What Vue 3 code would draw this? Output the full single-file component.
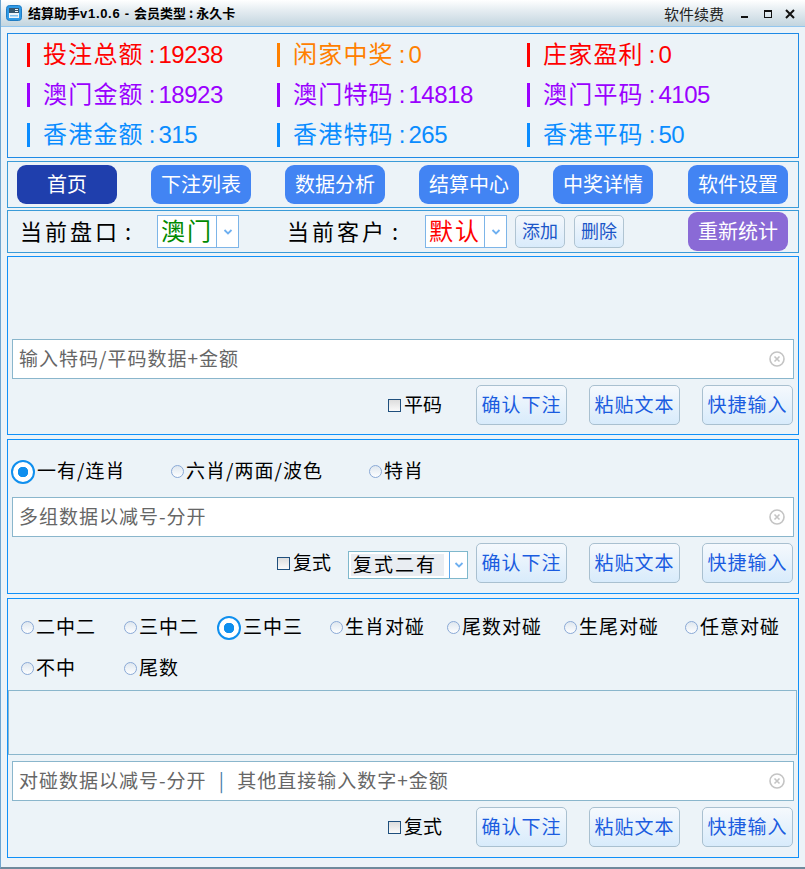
<script setup>
const stats = [
  [{ label: '投注总额', value: '19238', color: '#ff0000' }, { label: '闲家中奖', value: '0', color: '#ff8000' }, { label: '庄家盈利', value: '0', color: '#ff0000' }],
  [{ label: '澳门金额', value: '18923', color: '#9a00ff' }, { label: '澳门特码', value: '14818', color: '#9a00ff' }, { label: '澳门平码', value: '4105', color: '#9a00ff' }],
  [{ label: '香港金额', value: '315', color: '#0a8cff' }, { label: '香港特码', value: '265', color: '#0a8cff' }, { label: '香港平码', value: '50', color: '#0a8cff' }],
].flat()
const tabs = ['首页', '下注列表', '数据分析', '结算中心', '中奖详情', '软件设置']
const actions = ['确认下注', '粘贴文本', '快捷输入']
const midRadios = [{ t: '一有/连肖', on: true }, { t: '六肖/两面/波色' }, { t: '特肖' }]
const lowRadios = [{ t: '二中二' }, { t: '三中二' }, { t: '三中三', on: true }, { t: '生肖对碰' }, { t: '尾数对碰' }, { t: '生尾对碰' }, { t: '任意对碰' }, { t: '不中' }, { t: '尾数' }]
</script>

<template>
  <div class="app">
    <header class="titlebar">
      <svg class="logo" width="16" height="16" viewBox="0 0 16 16">
        <rect x="0.5" y="0.5" width="15" height="15" rx="3" fill="#2f9be8" stroke="#1f7cc4" />
        <rect x="3" y="3" width="10" height="10" fill="#eef5fa" />
        <rect x="3" y="3" width="10" height="5" fill="#35566e" />
        <rect x="9" y="4" width="3" height="1" fill="#eef5fa" />
        <rect x="9" y="6" width="3" height="1" fill="#eef5fa" />
        <rect x="4" y="10" width="8" height="1.5" fill="#7fc0ee" />
      </svg>
      <div class="title">结算助手<span class="ver">v1.0.6 - </span>会员类型 : 永久卡</div>
      <div class="renew">软件续费</div>
      <svg class="winctl" width="60" height="12" viewBox="0 0 60 12">
        <rect x="0" y="7" width="7" height="2" fill="#111" />
        <rect x="23.5" y="1.5" width="7" height="7" fill="none" stroke="#111" />
        <rect x="23" y="1" width="8" height="2" fill="#111" />
        <path d="M45 1l8 8M53 1l-8 8" stroke="#111" stroke-width="2" fill="none" />
      </svg>
    </header>

    <main class="stack">
      <section class="panel stats">
        <div v-for="s in stats" :key="s.label" class="stat" :style="{ color: s.color }">
          <i class="bar"></i>
          <span class="stat-text"><span class="stat-label">{{ s.label }}</span><span class="stat-colon">:</span><span class="stat-num">{{ s.value }}</span></span>
        </div>
      </section>

      <nav class="panel nav">
        <button v-for="(t, i) in tabs" :key="t" class="tab" :class="{ active: i === 0 }">{{ t }}</button>
      </nav>

      <section class="panel filter">
        <span class="flabel">当前盘口 :</span>
        <div class="select sel-market">
          <span class="val green">澳门</span>
          <span class="caret"><svg width="10" height="6" viewBox="0 0 10 6"><path d="M1.5 1l3.5 3.5L8.5 1" fill="none" stroke="#6fb0f0" stroke-width="1.8" /></svg></span>
        </div>
        <span class="flabel client">当前客户 :</span>
        <div class="select sel-client">
          <span class="val red">默认</span>
          <span class="caret"><svg width="10" height="6" viewBox="0 0 10 6"><path d="M1.5 1l3.5 3.5L8.5 1" fill="none" stroke="#6fb0f0" stroke-width="1.8" /></svg></span>
        </div>
        <button class="mini add">添加</button>
        <button class="mini del">删除</button>
        <button class="recount">重新统计</button>
      </section>

      <section class="panel p-special">
        <div class="field">
          <span class="ph">输入特码/平码数据+金额</span>
          <svg class="clear" width="16" height="16" viewBox="0 0 16 16"><circle cx="8" cy="8" r="7" fill="none" stroke="#c4c4c4" stroke-width="1.6" /><path d="M5.5 5.5l5 5M10.5 5.5l-5 5" stroke="#c4c4c4" stroke-width="1.6" /></svg>
        </div>
        <div class="actions">
          <label class="check wide"><i class="box"></i><span class="lift">平码</span></label>
          <button v-for="a in actions" :key="a" class="act">{{ a }}</button>
        </div>
      </section>

      <section class="panel p-mid">
        <div class="radios mid-grid">
          <div v-for="r in midRadios" :key="r.t" class="radio">
            <i :class="r.on ? 'dot-on' : 'dot'"></i><span class="lift">{{ r.t }}</span>
          </div>
        </div>
        <div class="field">
          <span class="ph">多组数据以减号-分开</span>
          <svg class="clear" width="16" height="16" viewBox="0 0 16 16"><circle cx="8" cy="8" r="7" fill="none" stroke="#c4c4c4" stroke-width="1.6" /><path d="M5.5 5.5l5 5M10.5 5.5l-5 5" stroke="#c4c4c4" stroke-width="1.6" /></svg>
        </div>
        <div class="actions">
          <label class="check"><i class="box"></i><span class="lift">复式</span></label>
          <div class="select sel-type">
            <span class="val type">复式二有</span>
            <span class="caret"><svg width="10" height="6" viewBox="0 0 10 6"><path d="M1.5 1l3.5 3.5L8.5 1" fill="none" stroke="#6fb0f0" stroke-width="1.8" /></svg></span>
          </div>
          <button v-for="a in actions" :key="a" class="act">{{ a }}</button>
        </div>
      </section>

      <section class="panel p-low">
        <div class="radios low-grid">
          <div v-for="r in lowRadios" :key="r.t" class="radio">
            <i :class="r.on ? 'dot-on' : 'dot'"></i><span class="lift">{{ r.t }}</span>
          </div>
        </div>
        <div class="blank"></div>
        <div class="field">
          <span class="ph">对碰数据以减号-分开 <em>|</em> 其他直接输入数字+金额</span>
          <svg class="clear" width="16" height="16" viewBox="0 0 16 16"><circle cx="8" cy="8" r="7" fill="none" stroke="#c4c4c4" stroke-width="1.6" /><path d="M5.5 5.5l5 5M10.5 5.5l-5 5" stroke="#c4c4c4" stroke-width="1.6" /></svg>
        </div>
        <div class="actions">
          <label class="check wide"><i class="box"></i><span class="lift">复式</span></label>
          <button v-for="a in actions" :key="a" class="act">{{ a }}</button>
        </div>
      </section>
    </main>
  </div>
</template>

<style>
html, body { margin: 0; padding: 0; }
</style>

<style scoped>
* { box-sizing: border-box; }
.app {
  width: 805px;
  height: 869px;
  background: #ecf3f8;
  border-left: 1px solid #6fa5cf;
  border-bottom: 2px solid #6f8a9c;
  font-family: "Noto Sans CJK SC", "Liberation Sans", sans-serif;
  color: #000;
  overflow: hidden;
}
button { font-family: inherit; padding: 0; cursor: pointer; }
.titlebar {
  height: 27px;
  margin-left: -1px;
  display: flex;
  align-items: center;
  background: linear-gradient(#ffffff, #e8eff3 35%, #c3d5df);
  border-bottom: 1px solid #93c6ee;
  padding-left: 6px;
}
.logo { flex: none; }
.title { margin-left: 6px; font-size: 13px; font-weight: bold; flex: 1; white-space: nowrap; padding-bottom: 2px; }
.ver { font-family: "Liberation Sans", sans-serif; letter-spacing: 0.7px; }
.renew { font-size: 15px; color: #222; margin-right: 17px; }
.winctl { margin-right: 4px; margin-top: 3px; }
.stack { display: flex; flex-direction: column; padding: 6px 6px 0 6px; }
.panel { border: 1px solid #1090f8; background: #ecf3f8; }

.stats {
  height: 125px;
  border-color: #1e8ae6;
  display: grid;
  grid-template-columns: 250px 250px 1fr;
  grid-auto-rows: 40px;
  padding: 1px 0 0 19px;
}
.stat { display: flex; align-items: center; font-size: 24px; white-space: nowrap; }
.bar { width: 3px; height: 24px; background: currentColor; margin-right: 13px; flex: none; }
.stat-text { display: flex; align-items: baseline; margin-bottom: 5px; }
.stat-label { letter-spacing: 1.2px; }
.stat-colon { font-family: "Liberation Sans", sans-serif; margin: 0 3px 0 5px; }
.stat-num { font-family: "Liberation Sans", sans-serif; letter-spacing: -0.5px; }

.nav {
  height: 47px;
  margin-top: 3px;
  border-color: #3a9bd8;
  display: flex;
  gap: 34px;
  padding: 3px 0 0 9px;
}
.tab {
  width: 100px;
  height: 39px;
  border: none;
  border-radius: 9px;
  background: #4284f3;
  color: #fff;
  font-size: 20px;
  padding-bottom: 3px;
}
.tab:last-child { margin-left: 1px; }
.tab.active { background: #1f3fad; }

.filter {
  height: 43px;
  margin-top: 2px;
  border-color: #3a9bd8;
  display: flex;
  align-items: center;
}
.flabel { font-size: 22px; letter-spacing: 3px; word-spacing: -3px; margin-left: 12px; padding-bottom: 4px; white-space: nowrap; }
.client { margin-left: 48px; }
.select { display: flex; background: #fff; border: 1px solid #7db5e8; height: 33px; }
.sel-market { width: 82px; margin-left: 23px; }
.sel-client { width: 82px; margin-left: 24px; }
.val { flex: 1; font-size: 24px; line-height: 28px; padding-left: 3px; letter-spacing: 2px; white-space: nowrap; }
.green { color: #008a00; }
.red { color: #ff0000; }
.caret { width: 22px; border-left: 1px solid #7db5e8; display: flex; align-items: center; justify-content: center; flex: none; }
.mini {
  width: 50px;
  height: 33px;
  border: 1px solid #b0c4d2;
  border-radius: 5px;
  background: linear-gradient(#f4f8fc, #d9ebfb);
  color: #1a56c8;
  font-size: 18px;
  padding-bottom: 3px;
  margin-bottom: 1px;
}
.add { margin-left: 8px; }
.del { margin-left: 9px; }
.recount {
  width: 100px;
  height: 39px;
  border: none;
  border-radius: 9px;
  background: #8a6ad6;
  color: #fff;
  font-size: 20px;
  margin-left: 64px;
  padding-bottom: 3px;
}

.p-special { height: 179px; margin-top: 3px; display: flex; flex-direction: column; justify-content: flex-end; padding-bottom: 9px; }
.p-mid { height: 155px; margin-top: 4px; }
.p-low { height: 260px; margin-top: 4px; }
.field {
  height: 40px;
  margin: 0 4px;
  background: #fff;
  border: 1px solid #8ab6cc;
  display: flex;
  align-items: center;
  justify-content: space-between;
  padding: 0 8px 0 6px;
}
.ph { font-size: 19px; letter-spacing: 1px; color: #666; white-space: nowrap; padding-bottom: 4px; }
.ph em { font-style: normal; color: #4a7ea8; margin: 0 7px; }
.clear { flex: none; }
.actions { display: flex; justify-content: flex-end; align-items: center; padding-right: 5px; margin-top: 6px; }
.act {
  width: 91px;
  height: 40px;
  margin-left: 22px;
  border: 1px solid #a9c0d0;
  border-radius: 5px;
  background: linear-gradient(#f5f9fd, #d8ebfb);
  color: #1a5ce0;
  font-size: 19px;
  letter-spacing: 1px;
  padding-bottom: 4px;
}
.act:first-of-type { margin-left: 8px; }
.check { display: flex; align-items: center; font-size: 19px; white-space: nowrap; }
.check.wide { margin-right: 26px; }
.box { width: 13px; height: 13px; border: 1px solid #1f4f7d; background: linear-gradient(#ddd, #fafafa); margin-right: 3px; }
.lift { margin-bottom: 4px; }
.sel-type { width: 120px; height: 28px; margin-left: 17px; margin-top: 4px; border-color: #7fb8cc; }
.type { background: #e9edf2; margin: 2px 5px 2px 2px; font-size: 19px; line-height: 19px; padding-left: 2px; letter-spacing: 2px; }
.sel-type .caret { width: 18px; border-left-color: #5aa8f0; }

.radios { display: grid; font-size: 19px; letter-spacing: 1px; }
.radio { display: flex; align-items: center; white-space: nowrap; }
.dot {
  width: 13px; height: 13px; border-radius: 50%; margin-right: 2px; flex: none;
  border: 1px solid #8aa9d6;
  background: linear-gradient(#dfe7ef, #fdfeff);
}
.dot-on {
  width: 24px; height: 24px; border-radius: 50%; margin-right: 2px; flex: none;
  border: 2px solid #0f8fee;
  background: radial-gradient(circle, #0f8fee 0, #0f8fee 5px, #fff 5.5px);
}
.mid-grid { grid-template-columns: 160px 198px auto; padding: 16px 0 0 3px; height: 57px; align-items: start; }
.low-grid { grid-template-columns: 103px 93px 113px 117px 117px 121px auto; grid-auto-rows: 41px; padding: 8px 0 0 13px; height: 91px; align-items: center; }
.blank { height: 65px; border: 1px solid #8ab6cc; margin: 0 1px 6px 0; }
</style>
